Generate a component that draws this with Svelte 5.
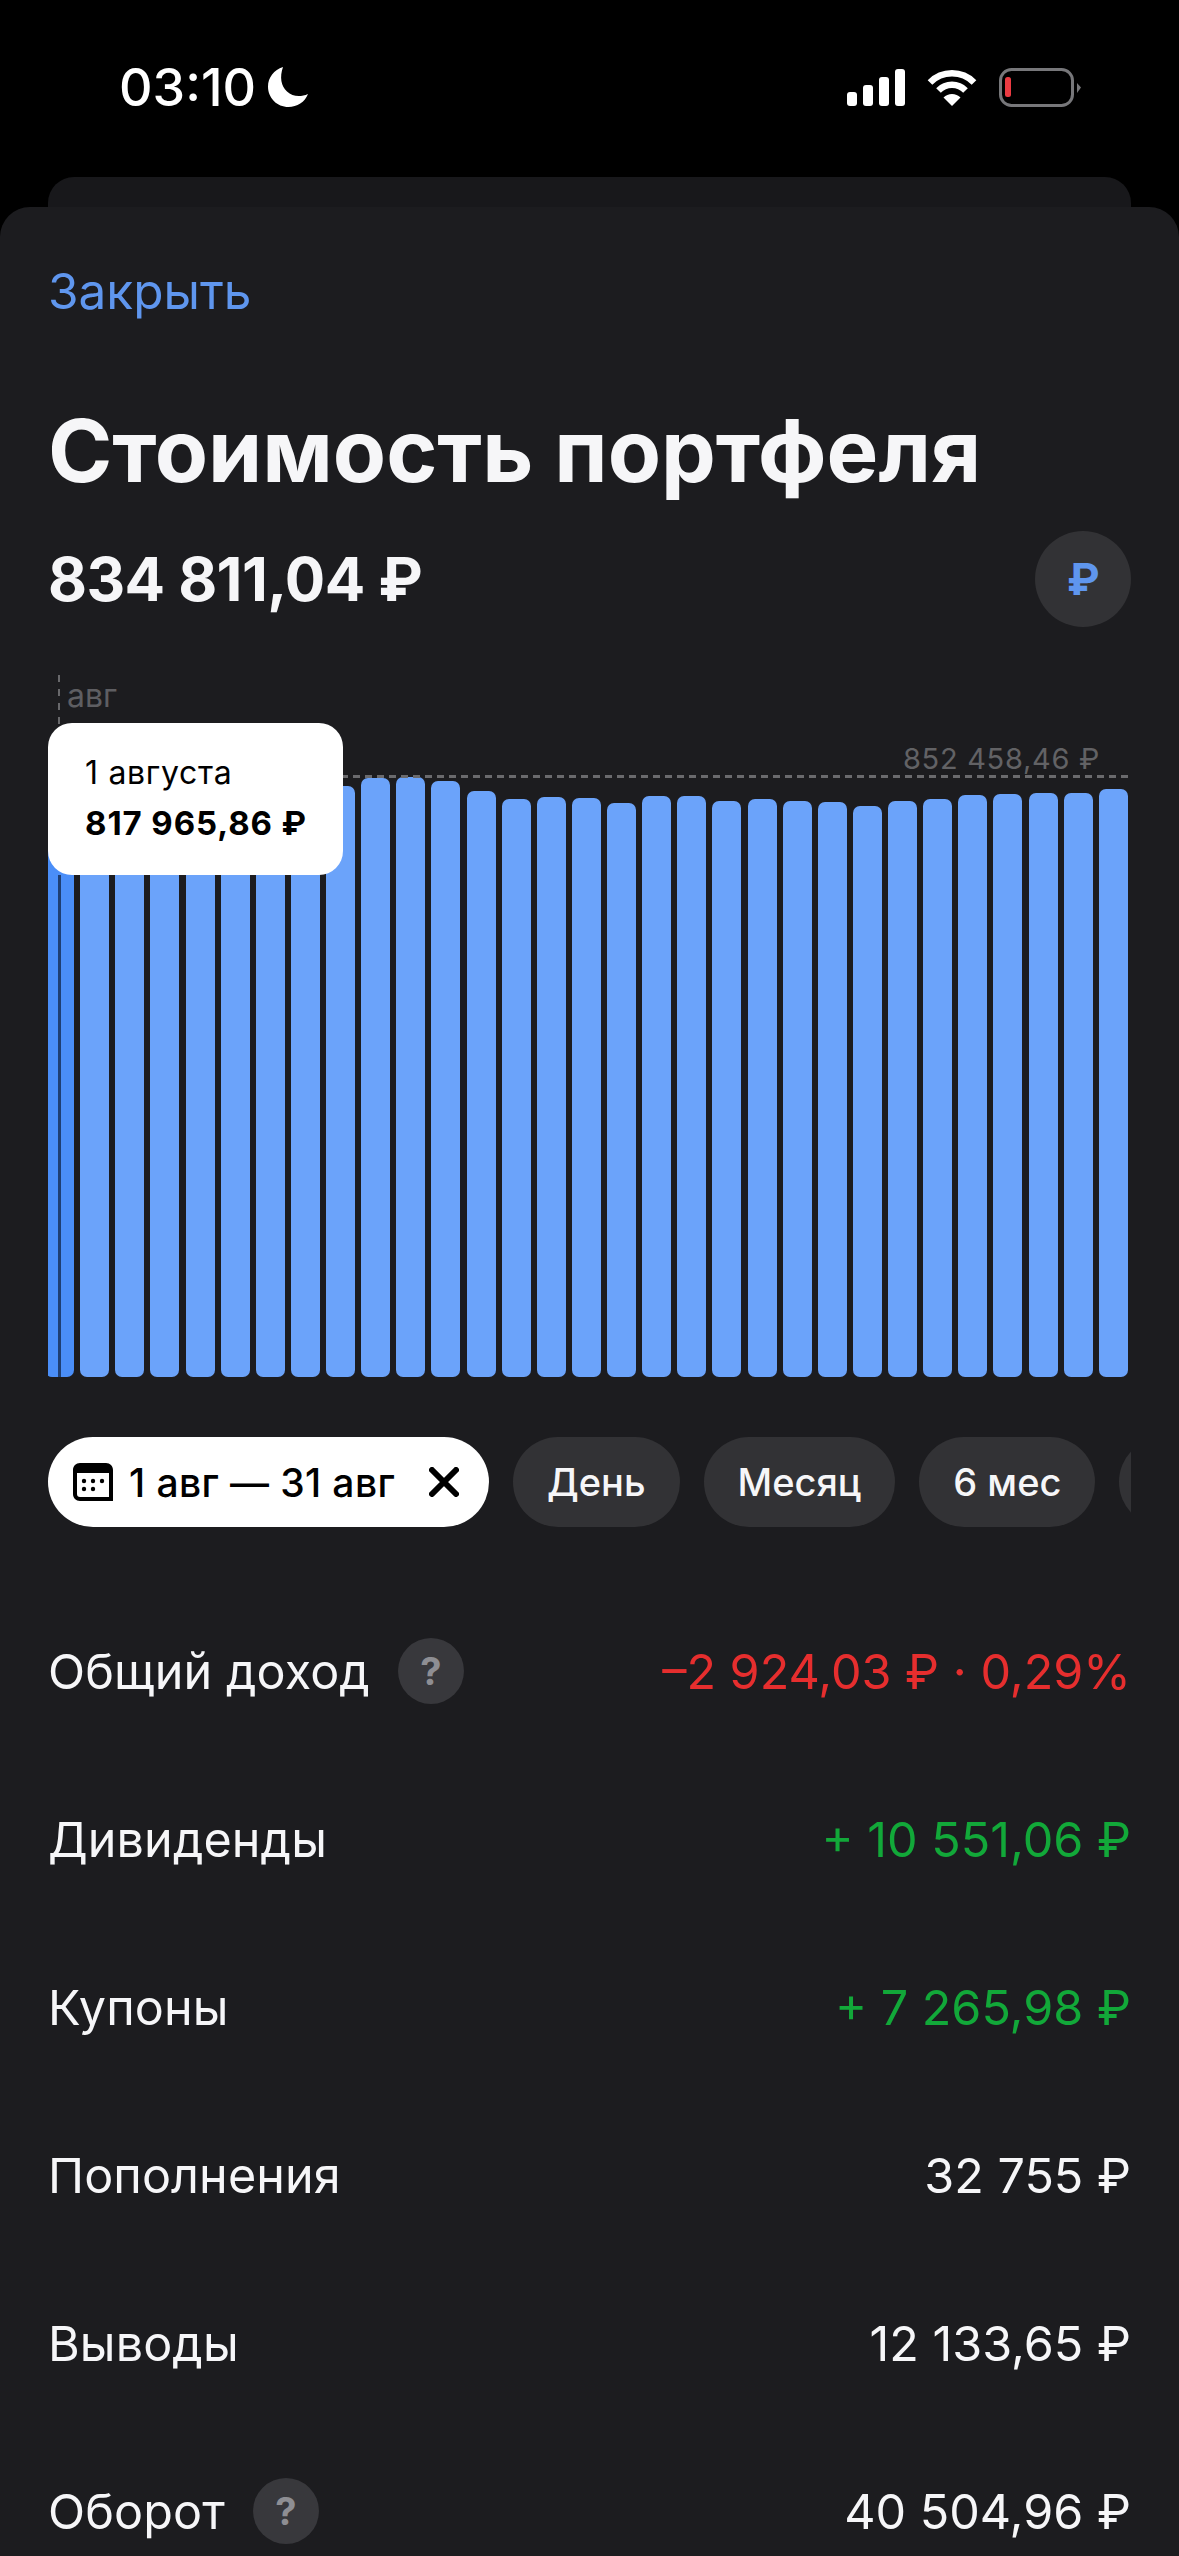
<script lang="ts">
	const tops = [
		790, 792, 790, 791, 789, 788, 787, 786, 786, 778, 777, 781, 791, 799, 797, 798, 803, 796, 796,
		801, 799, 801, 802, 806, 801, 799, 795, 794, 793, 793, 789
	];
	const chartBottom = 1377;

	const chips = ['День', 'Месяц', '6 мес'];

	const rows = [
		{ label: 'Общий доход', value: '–2 924,03 ₽ · 0,29%', tone: 'neg', help: true },
		{ label: 'Дивиденды', value: '+ 10 551,06 ₽', tone: 'pos' },
		{ label: 'Купоны', value: '+ 7 265,98 ₽', tone: 'pos' },
		{ label: 'Пополнения', value: '32 755 ₽' },
		{ label: 'Выводы', value: '12 133,65 ₽' },
		{ label: 'Оборот', value: '40 504,96 ₽', help: true }
	];
</script>

<div class="page">
	<header class="status">
		<div class="clock">
			<span>03:10</span>
			<svg class="moon" width="40" height="40" viewBox="0 0 40 40">
				<path d="M15 0C11.500 10 13 19 19 24.500C24.500 29.500 32 30.500 40 27C37 35 29 40 20.500 40C9 40 0 31 0 19.500C0 10.500 6 3 15 0Z" fill="#fff" />
			</svg>
		</div>
		<div class="indicators">
			<div class="signal">
				<i style="height: 14px"></i>
				<i style="height: 21px"></i>
				<i style="height: 29px"></i>
				<i style="height: 37px"></i>
			</div>
			<svg width="50" height="37" viewBox="0 0 50 37" fill="none">
				<path d="M3 13.500A31 31 0 0 1 47 13.500" stroke="#fff" stroke-width="6.500" />
				<path d="M11.500 21.500A19 19 0 0 1 38.500 21.500" stroke="#fff" stroke-width="6.500" />
				<path d="M25 37L16.500 28.500A12 12 0 0 1 33.500 28.500Z" fill="#fff" />
			</svg>
			<svg width="82" height="39" viewBox="0 0 82 39" fill="none">
				<rect x="1.500" y="1.500" width="72" height="36" rx="11" stroke="#77777a" stroke-width="3" />
				<rect x="6" y="9" width="6" height="20" rx="2.500" fill="#eb3b42" />
				<path d="M78 15L82 19.500L78 25Z" fill="#77777a" />
			</svg>
		</div>
	</header>

	<div class="back-card"></div>

	<main class="sheet">
		<div class="close">Закрыть</div>
		<h1>Стоимость портфеля</h1>

		<div class="total">
			<span>834 811,04 ₽</span>
			<div class="currency">₽</div>
		</div>

		<section class="chart">
			<div class="bars">
				{#each tops as top, i}
					<div class="bar" class:active={i === 0} style={`height: ${chartBottom - top}px`}></div>
				{/each}
			</div>
			<div class="cursor"></div>
			<div class="cursor-dash"></div>
			<span class="month">авг</span>
			<span class="max-label">852 458,46 ₽</span>
			<div class="max-line"></div>
			<div class="tooltip">
				<span>1 августа</span>
				<strong>817 965,86 ₽</strong>
			</div>
		</section>

		<nav class="chips">
			<div class="chip selected">
				<svg width="40" height="38" viewBox="0 0 40 38">
					<path d="M7 0H33C37 0 40 3 40 7V38H7C3 38 0 35 0 31V7C0 3 3 0 7 0ZM4 10V31C4 33 5 34 7 34H36V10Z" fill="#000" fill-rule="evenodd" />
					<circle cx="11" cy="18" r="2.200" />
					<circle cx="20" cy="18" r="2.200" />
					<circle cx="29" cy="18" r="2.200" />
					<circle cx="11" cy="26" r="2.200" />
					<circle cx="20" cy="26" r="2.200" />
				</svg>
				<span>1 авг — 31 авг</span>
				<svg class="x" width="30" height="30" viewBox="0 0 30 30">
					<path d="M3 3L27 27M27 3L3 27" stroke="#000" stroke-width="6" stroke-linecap="round" />
				</svg>
			</div>
			{#each chips as chip}
				<div class="chip">{chip}</div>
			{/each}
			<div class="chip more"></div>
		</nav>

		<section class="rows">
			{#each rows as row}
				<div class="row">
					<div class="label">
						<span>{row.label}</span>
						{#if row.help}
							<span class="help">?</span>
						{/if}
					</div>
					<span class="value {row.tone ?? ''}">{row.value}</span>
				</div>
			{/each}
		</section>
	</main>
</div>

<style>
	:global(body) {
		margin: 0;
		background: #000;
	}

	.page {
		height: 2556px;
		overflow: hidden;
		background: #000;
		font-family: Inter, 'Liberation Sans', sans-serif;
		color: #f6f6f8;
	}

	.status {
		height: 177px;
		box-sizing: border-box;
		padding: 62px 98px 0 119px;
		display: flex;
		justify-content: space-between;
		align-items: flex-start;
	}

	.clock {
		height: 50px;
		display: flex;
		align-items: center;
		gap: 12px;
		font-size: 52px;
		font-weight: 500;
		color: #fff;
	}

	.indicators {
		height: 50px;
		display: flex;
		align-items: center;
		gap: 22px;
	}

	.signal {
		display: flex;
		align-items: flex-end;
		gap: 6px;
		height: 37px;
	}

	.signal i {
		width: 10px;
		border-radius: 3px;
		background: #fff;
	}

	.back-card {
		height: 60px;
		margin: 0 48px -30px;
		border-radius: 26px 26px 0 0;
		background: #18181b;
	}

	.sheet {
		position: relative;
		height: 2349px;
		box-sizing: border-box;
		padding: 54px 48px 0;
		border-radius: 30px 30px 0 0;
		background: #1c1c1f;
	}

	.close {
		font-size: 49.500px;
		line-height: 60px;
		color: #5f96ee;
	}

	h1 {
		margin: 80px 0 0;
		font-size: 87px;
		line-height: 100px;
		font-weight: 700;
	}

	.total {
		margin-top: 30px;
		display: flex;
		justify-content: space-between;
		align-items: center;
		font-size: 60px;
		font-weight: 700;
		letter-spacing: -0.6px;
	}

	.currency {
		width: 96px;
		height: 96px;
		border-radius: 50%;
		background: #323235;
		color: #5f96ee;
		display: flex;
		align-items: center;
		justify-content: center;
		font-size: 44px;
		font-weight: 700;
	}

	.chart {
		position: relative;
		height: 702px;
		margin-top: 48px;
		overflow: hidden;
	}

	.bars {
		height: 100%;
		width: 1083px;
		margin-left: -3px;
		display: flex;
		justify-content: space-between;
		align-items: flex-end;
	}

	.bar {
		flex: 0 0 29px;
		border-radius: 7px;
		background: #6ba3fa;
	}

	.bar.active {
		background: #4a8ef8;
	}

	.cursor {
		position: absolute;
		left: 10px;
		bottom: 0;
		width: 3px;
		height: 502px;
		background: #1f3f73;
	}

	.cursor-dash {
		position: absolute;
		left: 10px;
		top: 0;
		width: 2px;
		height: 50px;
		background: repeating-linear-gradient(#68686b 0 7px, transparent 7px 14px);
	}

	.month {
		position: absolute;
		left: 19px;
		top: 1px;
		font-size: 32px;
		line-height: 40px;
		color: #5e5e62;
	}

	.max-label {
		position: absolute;
		right: 31px;
		top: 66px;
		font-size: 29px;
		line-height: 36px;
		letter-spacing: 0.7px;
		color: #626265;
	}

	.max-line {
		position: absolute;
		left: -7px;
		right: 3px;
		top: 100px;
		height: 3px;
		background: repeating-linear-gradient(90deg, #6a6a6d 0 7px, transparent 7px 12px);
	}

	.tooltip {
		position: absolute;
		left: 0;
		top: 48px;
		width: 295px;
		height: 152px;
		box-sizing: border-box;
		padding: 31px 0 0 37px;
		border-radius: 24px;
		background: #fff;
		color: #000;
		display: flex;
		flex-direction: column;
		gap: 12px;
		font-size: 32px;
		line-height: 38px;
		letter-spacing: 0.7px;
	}

	.tooltip strong {
		font-size: 33px;
		font-weight: 700;
		letter-spacing: 0.9px;
	}

	.chips {
		margin-top: 60px;
		display: flex;
		gap: 24px;
		overflow: hidden;
	}

	.chip {
		flex: none;
		height: 90px;
		box-sizing: border-box;
		padding: 0 34px;
		border-radius: 45px;
		background: #323235;
		display: flex;
		align-items: center;
		font-size: 38px;
		font-weight: 500;
	}

	.chip.selected {
		width: 441px;
		padding: 0 30px 0 25px;
		gap: 16px;
		background: #fff;
		color: #000;
		font-size: 39px;
		letter-spacing: 0.4px;
	}

	.chip.selected .x {
		margin-left: auto;
	}

	.chip.more {
		width: 170px;
	}

	.rows {
		margin-top: 60px;
	}

	.row {
		height: 168px;
		display: flex;
		justify-content: space-between;
		align-items: center;
		font-size: 48.500px;
	}

	.label {
		display: flex;
		align-items: center;
		gap: 28px;
		letter-spacing: 0.1px;
	}

	.help {
		width: 66px;
		height: 66px;
		border-radius: 50%;
		background: #38383c;
		color: #8e8e93;
		display: flex;
		align-items: center;
		justify-content: center;
		font-size: 38px;
		font-weight: 700;
	}

	.value.neg {
		color: #e62e2e;
	}

	.value.pos {
		color: #12a839;
	}
</style>
